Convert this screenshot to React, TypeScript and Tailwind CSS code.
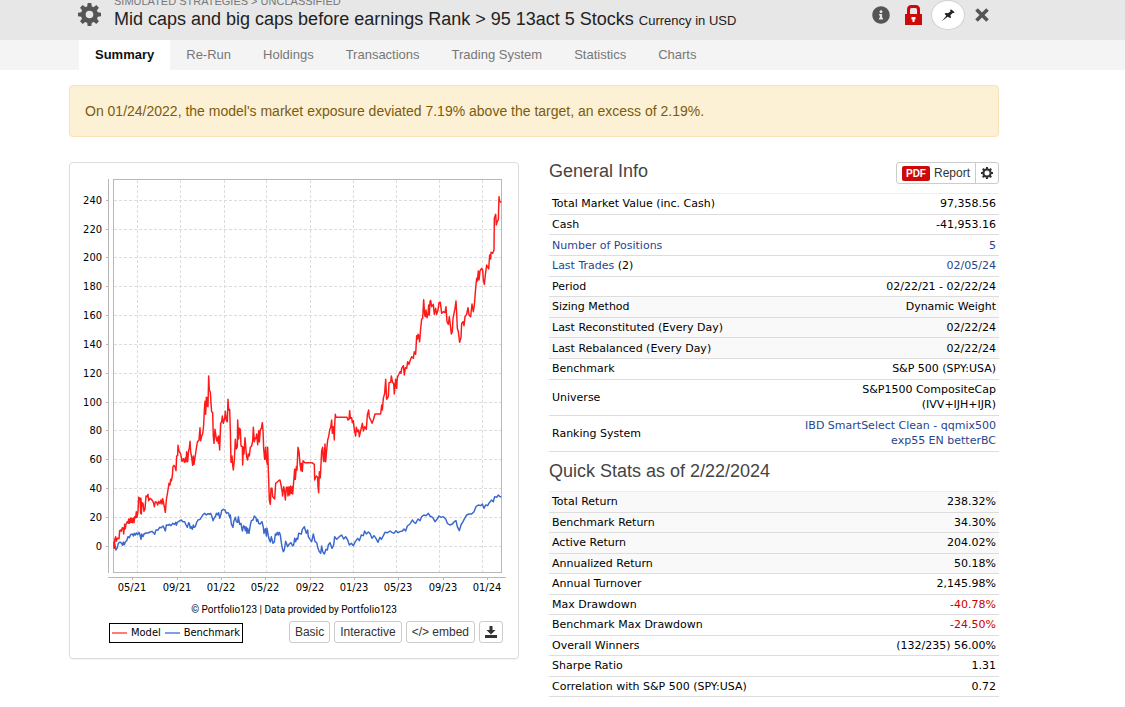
import type { ReactNode } from 'react';
import { FaInfoCircle } from 'react-icons/fa';
import clsx from 'clsx';

type Row = {
  label: ReactNode;
  value: ReactNode;
  shaded?: boolean;
  negative?: boolean;
};

const tabs = ['Summary', 'Re-Run', 'Holdings', 'Transactions', 'Trading System', 'Statistics', 'Charts'];

const linkClass = 'text-[#1f4690] hover:underline';

const generalInfo: Row[] = [
  { label: 'Total Market Value (inc. Cash)', value: '97,358.56' },
  { label: 'Cash', value: '-41,953.16' },
  {
    label: <a href="#positions" className={linkClass}>Number of Positions</a>,
    value: <a href="#positions" className={linkClass}>5</a>,
  },
  {
    label: <><a href="#trades" className={linkClass}>Last Trades</a> (2)</>,
    value: <a href="#trades" className={linkClass}>02/05/24</a>,
  },
  { label: 'Period', value: '02/22/21 - 02/22/24' },
  { label: 'Sizing Method', value: 'Dynamic Weight', shaded: true },
  { label: 'Last Reconstituted (Every Day)', value: '02/22/24', shaded: true },
  { label: 'Last Rebalanced (Every Day)', value: '02/22/24', shaded: true },
  { label: 'Benchmark', value: 'S&P 500 (SPY:USA)' },
  { label: 'Universe', value: <>S&amp;P1500 CompositeCap<br />(IVV+IJH+IJR)</> },
  {
    label: 'Ranking System',
    value: <a href="#ranking" className={linkClass}>IBD SmartSelect Clean - qqmix500<br />exp55 EN betterBC</a>,
  },
];

const quickStats: Row[] = [
  { label: 'Total Return', value: '238.32%', shaded: true },
  { label: 'Benchmark Return', value: '34.30%', shaded: true },
  { label: 'Active Return', value: '204.02%', shaded: true },
  { label: 'Annualized Return', value: '50.18%', shaded: true },
  { label: 'Annual Turnover', value: '2,145.98%' },
  { label: 'Max Drawdown', value: '-40.78%', negative: true },
  { label: 'Benchmark Max Drawdown', value: '-24.50%', negative: true },
  { label: 'Overall Winners', value: '(132/235) 56.00%' },
  { label: 'Sharpe Ratio', value: '1.31' },
  { label: 'Correlation with S&P 500 (SPY:USA)', value: '0.72' },
];

const yTicks = [
  [240, 200], [220, 229], [200, 257], [180, 286], [160, 315], [140, 344], [120, 373],
  [100, 402], [80, 430], [60, 459], [40, 488], [20, 517], [0, 546],
];

const xTicks: [string, number][] = [
  ['05/21', 132], ['09/21', 177], ['01/22', 221], ['05/22', 265], ['09/22', 310],
  ['01/23', 354], ['05/23', 398], ['09/23', 443], ['01/24', 487],
];

const xGrid = [137, 180, 224, 266, 310, 353, 396, 439, 482];

// Series are stored at three units per chart pixel.
const modelSeries =
  '161,515 163,535 164,510 167,500 169,514 172,505 177,506 179,482 183,480 184,484 187,473 190,475 191,492 194,463 196,476 198,462 202,455 204,460 206,447 208,460 211,445 213,457 215,445 217,458 220,444 222,458 224,440 227,443 229,425 231,442 234,425 236,382 240,385 242,430 243,385 244,432 246,398 249,400 252,424 255,417 258,378 261,380 264,373 266,392 270,385 274,388 278,393 281,400 283,410 286,395 290,397 293,405 296,394 300,401 303,390 306,402 308,386 312,405 316,427 319,390 323,366 327,340 330,345 332,328 334,333 337,318 339,290 342,286 345,290 348,302 350,258 353,257 354,226 357,243 362,252 364,262 366,274 370,266 373,277 376,264 378,276 380,245 383,275 386,240 388,235 390,214 392,245 395,262 398,286 400,258 402,283 405,262 409,236 412,216 417,210 420,173 422,212 425,198 428,192 431,165 433,122 435,94 437,133 439,82 441,108 443,82 444,110 446,18 448,60 451,66 453,100 455,126 458,128 460,200 462,220 465,178 468,200 470,213 473,202 475,220 476,198 479,240 482,160 485,155 487,138 490,160 494,145 496,124 499,152 502,155 504,88 506,120 509,118 511,180 513,277 516,258 518,285 520,300 523,270 526,208 529,237 532,230 533,150 536,207 538,175 541,178 543,228 547,230 548,285 550,232 552,252 555,203 558,240 560,262 563,270 565,252 568,258 571,232 575,228 578,213 580,172 583,215 586,204 588,205 590,192 593,224 596,182 598,216 601,180 604,175 607,158 609,180 611,235 614,268 617,232 619,268 622,283 623,232 625,300 628,390 631,403 633,355 636,355 638,380 642,385 644,387 647,340 652,336 656,332 660,330 663,345 666,362 668,378 671,350 674,365 676,390 679,352 682,352 684,378 687,350 689,375 692,348 694,370 697,350 698,372 701,335 704,298 706,328 709,290 711,300 714,232 717,245 720,282 723,302 724,280 727,304 729,272 735,278 756,278 763,283 764,330 769,318 773,322 774,350 776,368 778,305 781,323 785,242 788,232 790,270 792,275 795,222 797,275 800,240 803,210 806,200 809,180 812,172 815,150 817,190 820,170 823,210 824,165 826,133 828,142 861,142 864,150 867,148 869,122 871,145 875,143 877,158 880,152 883,180 887,198 889,172 893,185 896,180 898,200 902,182 907,160 910,183 914,170 919,178 922,135 926,120 928,142 932,150 936,160 940,150 945,132 962,132 965,105 967,120 970,85 974,70 977,28 980,88 985,80 987,38 992,37 994,18 998,38 1001,40 1003,72 1007,28 1010,55 1012,22 1017,12 1020,5 1023,10 1025,-5 1030,-13 1033,15 1036,-7 1040,-5 1043,-25 1047,-17 1050,-27 1055,-40 1060,-35 1063,-55 1067,-47 1070,-103 1073,-93 1074,-107 1077,-103 1079,-85 1082,-125 1085,-153 1088,-155 1091,-211 1094,-165 1096,-160 1098,-180 1101,-157 1104,-167 1106,-195 1108,-165 1110,-205 1112,-209 1115,-190 1120,-197 1123,-167 1127,-185 1130,-167 1134,-180 1137,-202 1141,-203 1145,-170 1150,-175 1155,-172 1158,-190 1161,-145 1165,-137 1168,-160 1171,-135 1174,-108 1177,-115 1179,-155 1182,-170 1185,-185 1188,-207 1190,-170 1192,-125 1195,-115 1199,-83 1203,-97 1205,-140 1209,-145 1212,-133 1215,-160 1220,-167 1224,-187 1227,-165 1232,-160 1236,-198 1240,-175 1243,-195 1247,-245 1250,-275 1252,-267 1255,-297 1257,-270 1260,-297 1265,-305 1268,-300 1270,-270 1273,-257 1276,-285 1280,-315 1286,-303 1289,-345 1292,-333 1293,-353 1298,-350 1302,-360 1303,-455 1307,-467 1309,-435 1312,-447 1315,-450 1317,-520 1319,-505 1324,-503';

const benchmarkSeries =
  '161,535 164,522 168,540 172,533 175,520 180,516 185,520 188,526 190,516 193,524 196,516 200,512 204,500 208,503 212,494 217,492 220,498 223,490 226,495 229,489 233,494 237,487 240,495 243,508 245,492 249,500 252,492 258,489 264,489 270,486 276,484 280,488 284,493 288,480 294,480 299,472 304,473 309,468 312,473 316,483 319,465 324,466 328,463 333,467 338,460 343,463 347,457 349,466 352,457 358,453 364,450 369,455 374,455 378,465 382,472 386,458 388,460 391,475 394,470 397,478 400,465 402,472 406,470 410,457 414,450 420,448 424,442 430,433 434,430 439,435 444,431 448,433 452,430 456,440 459,452 463,444 467,438 469,430 473,434 476,428 479,445 483,432 485,422 490,418 495,420 499,430 503,428 506,430 509,443 511,435 514,462 519,472 521,455 526,442 529,455 533,457 535,440 539,463 543,460 547,483 551,467 554,472 556,482 558,470 561,490 563,475 567,490 571,465 574,452 579,450 583,438 588,443 590,454 593,448 596,460 600,462 606,455 610,472 612,490 616,476 619,498 621,475 625,498 628,510 631,516 634,500 639,520 643,516 646,492 649,495 652,487 655,495 658,487 661,495 664,518 667,535 670,545 673,540 677,514 680,522 683,530 688,522 693,518 698,528 701,525 704,505 707,515 710,505 713,508 716,490 724,492 727,478 733,470 736,480 739,490 743,480 745,500 750,508 755,515 760,492 765,515 770,518 774,535 778,545 782,550 785,528 788,545 793,552 798,538 802,540 805,525 810,518 816,535 821,525 824,500 830,508 838,500 845,495 851,507 857,500 863,510 868,525 874,520 880,527 886,515 893,505 898,512 904,495 910,497 914,483 919,492 925,486 930,490 936,505 942,497 948,505 954,517 960,502 964,508 970,497 975,487 983,488 990,483 996,487 1002,490 1008,482 1014,488 1020,485 1027,483 1032,477 1037,483 1042,468 1050,462 1057,450 1063,458 1067,460 1074,447 1080,452 1085,440 1092,435 1098,437 1105,430 1110,438 1118,442 1125,455 1131,448 1137,438 1143,442 1150,440 1157,447 1162,460 1170,465 1177,462 1183,455 1188,452 1192,470 1198,482 1203,465 1209,455 1214,445 1220,435 1227,432 1235,432 1242,425 1248,410 1255,405 1262,407 1267,402 1272,415 1277,405 1283,407 1288,398 1295,390 1300,395 1304,380 1310,382 1315,375 1320,380 1324,380';

function GearIcon({ size, ring = 5 }: { size: number; ring?: number }) {
  return (
    <svg width={size} height={size} viewBox="-12 -12 24 24" fill="currentColor" aria-hidden="true">
      {[0, 45, 90, 135, 180, 225, 270, 315].map((angle) => (
        <path key={angle} d="M-2.6-7 L-1.9-12 H1.9 L2.6-7 Z" transform={`rotate(${angle})`} />
      ))}
      <circle r={9 - ring / 2} fill="none" stroke="currentColor" strokeWidth={ring} />
    </svg>
  );
}

function LockIcon() {
  return (
    <svg width="17" height="20" viewBox="0 0 17 20" aria-hidden="true">
      <path d="M3.5 10V4.5Q3.5 1.5 6.5 1.5H10.5Q13.5 1.5 13.5 4.5V10" fill="none" stroke="#cc0a0a" strokeWidth="3" />
      <path d="M0 9H17V20H0Z" fill="#cc0a0a" />
      <path d="M6.5 12H10.5V14.5H9.5V17H7.5V14.5H6.5Z" fill="#fff" />
    </svg>
  );
}

function PinIcon() {
  return (
    <svg width="13" height="12" viewBox="0 0 39 36" fill="#222" aria-hidden="true">
      <path d="M0 36L13 20L8 15Q8 12 12 12L18 13L26 7L24 3Q26 0 29 2L37 9Q38 12 35 12L32 12L25 19L27 25Q26 28 23 26L17 23Z" />
    </svg>
  );
}

function DownloadIcon() {
  return (
    <svg width="12" height="12" viewBox="0 0 12 12" fill="#333" aria-hidden="true">
      <path d="M4.5 0H7.5V4H10.5L6 8.5L1.5 4H4.5Z" />
      <path d="M0 9H12V12H0Z" />
    </svg>
  );
}

function PerformanceChart() {
  return (
    <svg
      viewBox="70 163 448 436"
      className="block w-full font-['DejaVu_Sans_Condensed','DejaVu_Sans',sans-serif] text-[11px]"
      role="img"
      aria-label="Model and benchmark performance"
    >
      <g stroke="#dcdcdc" strokeDasharray="3 2" shapeRendering="crispEdges">
        {yTicks.map(([value, y]) => <path key={value} d={`M114 ${y + 0.5}H501`} />)}
        {xGrid.map((x) => <path key={x} d={`M${x + 0.5} 180V572`} />)}
      </g>
      <g fill="none" stroke="#b8b8b8" shapeRendering="crispEdges">
        <path d="M108.5 179V573M108 577.5H506" />
        <rect x="113.5" y="179.5" width="388" height="393" />
        {yTicks.map(([value, y]) => <path key={value} d={`M106 ${y + 0.5}H108`} />)}
        {xTicks.map(([label, x]) => <path key={label} d={`M${x + 0.5} 578V580`} />)}
      </g>
      {yTicks.map(([value, y]) => (
        <text key={value} x="102" y={y + 4} textAnchor="end">{value}</text>
      ))}
      {xTicks.map(([label, x]) => (
        <text key={label} x={x} y="591" textAnchor="middle">{label}</text>
      ))}
      <g transform="translate(60 370) scale(0.33333)" fill="none" strokeWidth="4.4" strokeLinejoin="round">
        <polyline points={benchmarkSeries} stroke="#3a68cc" />
        <polyline points={modelSeries} stroke="#ff1a1a" />
      </g>
    </svg>
  );
}

function LegendItem({ color, children }: { color: string; children: ReactNode }) {
  return (
    <span className="flex items-center gap-1">
      <span className={clsx('h-[2px] w-[15px]', color)} />
      {children}
    </span>
  );
}

function SmallButton({ children, label }: { children: ReactNode; label?: string }) {
  return (
    <button
      type="button"
      aria-label={label}
      className="flex h-[22px] items-center rounded-[3px] border border-[#ccc] bg-white px-[5px] text-xs text-[#333]"
    >
      {children}
    </button>
  );
}

// The height is a minimum: spare pixels are shared between the rows.
function StatsTable({ rows, className }: { rows: Row[]; className: string }) {
  return (
    <table
      className={clsx(
        "w-full border-collapse border-t border-[#eee] font-['DejaVu_Sans',sans-serif] text-[11px] leading-[15px] text-black",
        className,
      )}
    >
      <tbody>
        {rows.map((row, i) => (
          <tr key={i} className={clsx('border-b border-[#ddd]', row.shaded && 'bg-[#f9f9f9]')}>
            <th scope="row" className="px-[3px] py-[2px] text-left font-normal">{row.label}</th>
            <td className={clsx('px-[3px] py-[2px] text-right', row.negative && 'text-[#c00]')}>{row.value}</td>
          </tr>
        ))}
      </tbody>
    </table>
  );
}

export default function App() {
  return (
    <div className="min-h-screen bg-white font-['Liberation_Sans',Arial,sans-serif] text-[#444]">
      <header className="h-10 overflow-hidden bg-[#e7e7e7] pl-[69px]">
        <div className="flex h-full max-w-[930px] items-start justify-between">
          <div className="flex h-full items-end gap-[13px] pl-[9px]">
            <button type="button" aria-label="Settings" className="mb-[14px] text-[#555]">
              <GearIcon size={23} />
            </button>
            <div className="pb-[7px]">
              <p className="text-[11px] leading-3 text-[#777] uppercase">Simulated Strategies &gt; Unclassified</p>
              <h1 className="text-lg leading-6 text-[#222]">
                Mid caps and big caps before earnings Rank &gt; 95 13act 5 Stocks{' '}
                <small className="text-[13px] leading-6">Currency in USD</small>
              </h1>
            </div>
          </div>
          <div className="flex h-[30px] items-center pr-[10px] text-[#555]">
            <button type="button" aria-label="Info" className="mr-[15px]"><FaInfoCircle size={18} /></button>
            <button type="button" aria-label="Locked" className="mr-[9px]"><LockIcon /></button>
            <button
              type="button"
              aria-label="Pin"
              className="mr-[10px] flex h-[30px] w-[34px] items-center justify-center rounded-[50%] border border-[#d0d0d0] bg-white"
            >
              <PinIcon />
            </button>
            <button type="button" aria-label="Close">
              <svg width="14" height="14" viewBox="0 0 14 14" stroke="currentColor" strokeWidth="3.6" aria-hidden="true">
                <path d="M1.5 1.5L12.5 12.5M12.5 1.5L1.5 12.5" />
              </svg>
            </button>
          </div>
        </div>
      </header>

      <nav className="flex h-[30px] bg-[#f4f4f4] pl-[79px] text-[13px]">
        {tabs.map((tab, i) => (
          <a
            key={tab}
            href={`#${tab}`}
            className={clsx(
              'flex items-center px-4',
              i === 0 ? 'bg-white font-bold text-[#111]' : 'text-[#777]',
            )}
          >
            {tab}
          </a>
        ))}
      </nav>

      <main className="ml-[69px] max-w-[930px] pt-[15px]">
        <div className="rounded-[4px] border border-[#fae1b8] bg-[#fcf1d5] p-[15px] text-sm text-[#7d5b0c]">
          On 01/24/2022, the model&apos;s market exposure deviated 7.19% above the target, an excess of 2.19%.
        </div>

        <div className="mt-[25px] grid grid-cols-2 items-start gap-[30px]">
          <section className="rounded-[4px] border border-[#ddd] pb-[15px] shadow-[0_1px_1px_rgba(0,0,0,0.05)]">
            <PerformanceChart />
            <p className="mt-[5px] text-center font-[Roboto,sans-serif] text-[10px] leading-3 text-black">
              © Portfolio123 | Data provided by Portfolio123
            </p>
            <div className="mt-[5px] flex items-end justify-between pr-[15px] pl-[39px]">
              <div className="flex h-5 items-center gap-1 border border-black px-[2px] font-['DejaVu_Sans_Condensed','DejaVu_Sans',sans-serif] text-[11px] text-black">
                <LegendItem color="bg-[#ff7a7a]">Model</LegendItem>
                <LegendItem color="bg-[#7f9fe6]">Benchmark</LegendItem>
              </div>
              <div className="flex gap-1">
                <SmallButton>Basic</SmallButton>
                <SmallButton>Interactive</SmallButton>
                <SmallButton>&lt;/&gt; embed</SmallButton>
                <SmallButton label="Download"><DownloadIcon /></SmallButton>
              </div>
            </div>
          </section>

          <section>
            <div className="flex h-[31px] items-start justify-between">
              <h2 className="text-lg leading-[18px]">General Info</h2>
              <div className="flex h-[22px] rounded-[3px] border border-[#ccc] text-xs text-[#333]">
                <button type="button" className="flex items-center gap-1 px-[5px]">
                  <span className="rounded-[2px] bg-[#cc0a0a] px-1 text-[10px] leading-[15px] font-bold text-white">PDF</span>
                  Report
                </button>
                <button type="button" aria-label="Report settings" className="border-l border-[#ccc] px-[5px]">
                  <GearIcon size={12} ring={4} />
                </button>
              </div>
            </div>
            <StatsTable rows={generalInfo} className="h-[259px]" />
            <h2 className="py-[10px] text-lg leading-[19px]">Quick Stats as of 2/22/2024</h2>
            <StatsTable rows={quickStats} className="h-[206px]" />
          </section>
        </div>
      </main>
    </div>
  );
}
